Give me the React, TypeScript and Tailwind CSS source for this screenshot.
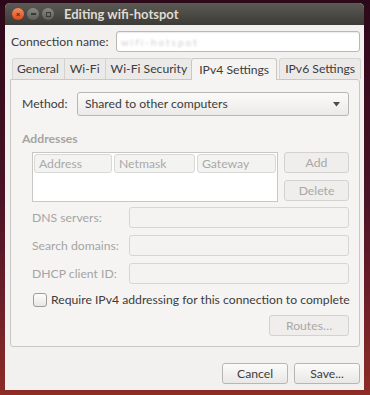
import React from 'react'

const FONT = { fontFamily: 'Lato, "Open Sans", sans-serif' }

function Entry({ className = '', disabled = false, children }: { className?: string; disabled?: boolean; children?: React.ReactNode }) {
  return (
    <div
      className={`h-[21px] rounded-[3px] border ${
        disabled ? 'border-[#d6d5d3] bg-[#f4f3f2]' : 'border-[#b9b8b5] bg-white shadow-[inset_0_1px_1px_rgba(0,0,0,0.08)]'
      } ${className}`}
    >
      {children}
    </div>
  )
}

function Button({ label, disabled = false, className = '' }: { label: string; disabled?: boolean; className?: string }) {
  return (
    <div
      className={`flex h-[21px] items-center justify-center rounded-[3px] border ${
        disabled
          ? 'border-[#d3d2d0] bg-[#efeeed] text-[#a9a8a6]'
          : 'border-[#b7b6b3] bg-gradient-to-b from-[#fbfbfa] to-[#e9e8e6] text-[#3c3c3c]'
      } ${className}`}
    >
      {label}
    </div>
  )
}

function Tab({ label, active = false, className = '' }: { label: string; active?: boolean; className?: string }) {
  if (active) {
    return (
      <div className={`relative z-10 -mb-px flex h-[22px] items-center whitespace-nowrap rounded-t-[3px] border border-b-0 border-[#c9c8c5] bg-[#f5f4f3] text-[#3c3c3c] ${className}`}>
        {label}
      </div>
    )
  }
  return (
    <div className={`flex h-[21px] items-center whitespace-nowrap text-[#3c3c3c] ${className}`}>
      {label}
    </div>
  )
}

function FieldRow({ label, className = '' }: { label: string; className?: string }) {
  return (
    <div className={`flex h-[21px] items-center ${className}`}>
      <span className="w-[97px] whitespace-nowrap text-[#a5a4a2]">{label}</span>
      <Entry disabled className="w-[220px]" />
    </div>
  )
}

export default function App() {
  return (
    <div
      className="h-[395px] w-[370px] overflow-hidden bg-gradient-to-b from-[#2c0919] via-[#4a1226] to-[#8e2c25] pt-[3px] pl-[5px] text-[12.2px] leading-[16px] text-[#3c3c3c]"
      style={FONT}
    >
      <div className="flex h-[387px] w-[359px] flex-col overflow-hidden rounded-t-[5px] bg-[#f2f1f0]">
        {/* title bar */}
        <div className="flex h-[22px] items-center bg-gradient-to-b from-[#5b5a54] to-[#3c3b37] pl-[7px]">
          <div className="flex h-[12px] w-[12px] items-center justify-center rounded-full bg-gradient-to-b from-[#f58b5c] to-[#dd4814] text-[8px] font-bold leading-none text-[#5a1d08]">
            ×
          </div>
          <div className="ml-[3px] flex h-[12px] w-[12px] items-center justify-center rounded-full bg-gradient-to-b from-[#8a8983] to-[#5f5e59]">
            <div className="h-[1.5px] w-[5px] bg-[#3b3a36]" />
          </div>
          <div className="ml-[3px] flex h-[12px] w-[12px] items-center justify-center rounded-full bg-gradient-to-b from-[#8a8983] to-[#5f5e59]">
            <div className="h-[5px] w-[5px] border border-[#3b3a36]" />
          </div>
          <span className="ml-[10px] whitespace-nowrap text-[13px] font-bold text-[#dfdbd2]">Editing wifi-hotspot</span>
        </div>

        <div className="flex flex-1 flex-col pl-[5px] pr-[4px]">
          {/* connection name */}
          <div className="mt-[6px] flex h-[21px] items-center">
            <span className="whitespace-nowrap pl-[1px]">Connection name:</span>
            <Entry className="ml-auto flex w-[244px] items-center overflow-hidden pl-[4px]">
              <span className="whitespace-nowrap text-[10px] tracking-[2px] text-[#cfcfcf] blur-[1px]">wifi-hotspot</span>
            </Entry>
          </div>

          {/* tabs */}
          <div className="mt-[6px] flex items-end pl-[2px]">
            <div className="flex h-[21px] items-center rounded-tl-[3px] border-t border-l border-[#d6d5d2] bg-[#eceae8]">
              <Tab label="General" className="border-r border-[#d3d2cf] pl-[4px] pr-[5px]" />
              <Tab label="Wi-Fi" className="border-r border-[#d3d2cf] px-[5px]" />
              <Tab label="Wi-Fi Security" className="pl-[5px] pr-[4px]" />
            </div>
            <Tab label="IPv4 Settings" active className="px-[7px]" />
            <div className="ml-[2px] flex h-[21px] items-center rounded-t-[3px] border-t border-r border-l border-[#d6d5d2] bg-[#eceae8]">
              <Tab label="IPv6 Settings" className="px-[5px]" />
            </div>
          </div>

          {/* notebook page */}
          <div className="flex h-[268px] flex-col rounded-b-[3px] rounded-tr-[3px] border border-[#c9c8c5] bg-[#f5f4f3] pl-[11px] pr-[10px]">
            <div className="mt-[12px] flex h-[24px] items-center">
              <span className="w-[55px]">Method:</span>
              <div className="flex h-[24px] flex-1 items-center rounded-[3px] border border-[#b7b6b3] bg-gradient-to-b from-[#fbfbfa] to-[#ebeae8] pl-[7px] pr-[8px]">
                <span className="whitespace-nowrap">Shared to other computers</span>
                <svg className="ml-auto" width="7" height="5" viewBox="0 0 7 5">
                  <path d="M0 0 L7 0 L3.5 4.5 Z" fill="#4c4c4c" />
                </svg>
              </div>
            </div>

            <div className="mt-[15px] font-bold text-[#a5a4a2]">Addresses</div>

            <div className="mt-[5px] flex pl-[10px]">
              <div className="flex h-[50px] w-[246px] flex-col border border-[#c8c7c4] bg-white p-[1px]">
                <div className="flex h-[19px] gap-[2px] text-[#aaa9a7]">
                  <div className="flex w-[78px] items-center rounded-[3px] border border-[#d9d8d6] bg-[#f3f3f2] pl-[4px]">Address</div>
                  <div className="flex w-[81px] items-center rounded-[3px] border border-[#d9d8d6] bg-[#f3f3f2] pl-[4px]">Netmask</div>
                  <div className="flex flex-1 items-center rounded-[3px] border border-[#d9d8d6] bg-[#f3f3f2] pl-[4px]">Gateway</div>
                </div>
              </div>
              <div className="ml-[6px] flex w-[65px] flex-col gap-[7px]">
                <Button label="Add" disabled />
                <Button label="Delete" disabled />
              </div>
            </div>

            <div className="mt-[5px] flex flex-col gap-[7px] pl-[10px]">
              <FieldRow label="DNS servers:" />
              <FieldRow label="Search domains:" />
              <FieldRow label="DHCP client ID:" />
            </div>

            <div className="mt-[8px] flex items-center pl-[11px]">
              <div className="h-[14px] w-[14px] shrink-0 rounded-[3px] border border-[#9e9d9a] bg-gradient-to-b from-[#fdfdfc] to-[#e7e6e4]" />
              <span className="ml-[4px] whitespace-nowrap">Require IPv4 addressing for this connection to complete</span>
            </div>

            <div className="mt-[7px] flex justify-end">
              <Button label="Routes…" disabled className="w-[80px]" />
            </div>
          </div>

          {/* dialog buttons */}
          <div className="mt-[16px] flex justify-end gap-[6px]">
            <Button label="Cancel" className="w-[66px]" />
            <Button label="Save..." className="w-[66px]" />
          </div>
        </div>
      </div>
    </div>
  )
}
